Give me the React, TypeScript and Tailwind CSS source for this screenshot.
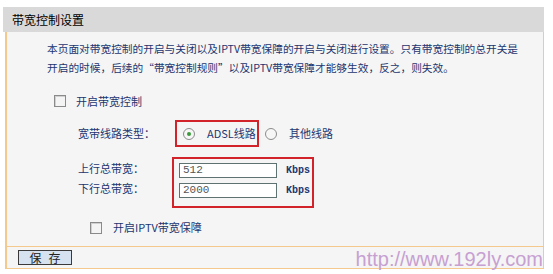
import React from "react";

const cjk = { fontFamily: '"Noto Sans CJK SC", "Liberation Sans", sans-serif' };
const mono = { fontFamily: '"Liberation Mono", "Noto Sans CJK SC", monospace' };

function Checkbox() {
  return <span className="inline-block w-[12px] h-[12px] border border-[#8a8a8a] bg-[#f4f4f4] shadow-[inset_1px_1px_0_#d0d0d0]" />;
}

function Radio({ checked }: { checked?: boolean }) {
  return (
    <span className="inline-flex w-[12px] h-[12px] rounded-full border border-[#8c8c8c] bg-[#f6f6f6] items-center justify-center">
      {checked && <span className="w-[4px] h-[4px] rounded-full bg-[#3a9a3a]" />}
    </span>
  );
}

export default function App() {
  return (
    <div className="w-[553px] h-[274px] bg-white relative overflow-hidden pt-[7px]" style={cjk}>
      <div className="ml-[3px] w-[541px]">
        <div className="h-[25px] bg-[#d9d9d9] flex items-center pl-[9px] text-[12px] text-black">带宽控制设置</div>
        <div className="ml-[2px] border-l-2 border-r border-[#f3c98d] bg-[#f5f5f5]">
          <div className="pl-[40px] pt-[7px] text-[10.7px] leading-[19px] text-[#1c3670]">
            <div>本页面对带宽控制的开启与关闭以及IPTV带宽保障的开启与关闭进行设置。只有带宽控制的总开关是</div>
            <div>开启的时候，后续的“带宽控制规则”以及IPTV带宽保障才能够生效，反之，则失效。</div>
          </div>
          <div className="flex items-center pl-[47px] pt-[18px] h-[30px] text-[11px] text-[#1c3670]">
            <Checkbox />
            <span className="ml-[10px]">开启带宽控制</span>
          </div>
          <div className="flex items-center pl-[71px] pt-[13px] text-[11px] text-[#1c3670]">
            <span className="w-[97px]">宽带线路类型：</span>
            <div className="flex items-center h-[27px] w-[84px] border-2 border-[#d2232a] pl-[6px]">
              <Radio checked />
              <span className="ml-[12px]">ADSL线路</span>
            </div>
            <div className="flex items-center ml-[6px]">
              <Radio />
              <span className="ml-[12px]">其他线路</span>
            </div>
          </div>
          <div className="flex pl-[71px] pt-[10px] text-[11px] text-[#1c3670]">
            <div className="flex flex-col w-[94px] pt-[5px] gap-[7px] leading-[13px]">
              <span>上行总带宽：</span>
              <span>下行总带宽：</span>
            </div>
            <div className="border-2 border-[#d2232a] w-[142px] h-[51px] pl-[5px] pt-[4px] flex flex-col gap-[5px]">
              <div className="flex items-center">
                <div className="w-[98px] h-[15px] border border-[#5e7272] bg-white text-[11px] leading-[13px] pl-[3px] text-[#555]" style={mono}>512</div>
                <span className="ml-[9px] text-[10px] font-bold text-[#1c3670]" style={mono}>Kbps</span>
              </div>
              <div className="flex items-center">
                <div className="w-[98px] h-[15px] border border-[#5e7272] bg-white text-[11px] leading-[13px] pl-[3px] text-[#555]" style={mono}>2000</div>
                <span className="ml-[9px] text-[10px] font-bold text-[#1c3670]" style={mono}>Kbps</span>
              </div>
            </div>
          </div>
          <div className="flex items-center pl-[83px] pt-[11px] h-[38px] pb-[10px] text-[11px] text-[#1c3670]">
            <Checkbox />
            <span className="ml-[11px]">开启IPTV带宽保障</span>
          </div>
          <div className="border-t border-[#f3c98d] h-[23px] border-b flex items-center pl-[11px]">
            <div className="w-[54px] h-[15px] border border-[#3a3a3a] bg-[#d6e2f0] flex items-center justify-center text-[12px] text-[#222] tracking-[7px] pl-[7px] leading-none">保存</div>
          </div>
        </div>
      </div>
      <div className="absolute right-[10px] top-[248px] text-[20px] leading-[22px] text-[#c7a0d2]" style={{ fontFamily: '"Liberation Sans", Arial, sans-serif' }}>
        http://www.192ly.com
      </div>
    </div>
  );
}
